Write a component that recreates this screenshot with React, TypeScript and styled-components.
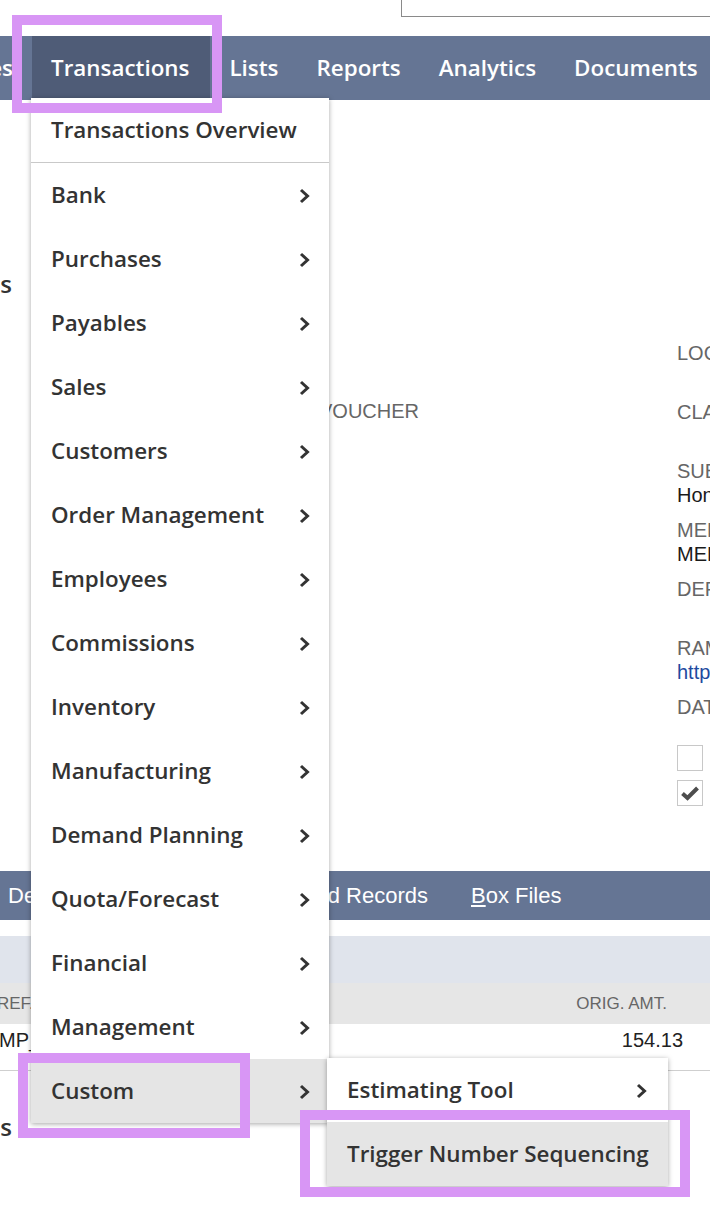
import React from "react";
import styled, { createGlobalStyle } from "styled-components";

const Global = createGlobalStyle`
  html, body { margin: 0; padding: 0; background: #fff; overflow: hidden; }
  * { box-sizing: border-box; }
`;

const Page = styled.div`
  position: relative;
  width: 710px;
  height: 1212px;
  overflow: hidden;
  background: #fff;
  font-family: "Liberation Sans", Arial, sans-serif;
`;

const TopStrip = styled.div`
  height: 36px;
  display: flex;
  padding-left: 401px;
`;

const SearchBox = styled.div`
  width: 400px;
  height: 17px;
  border: 1px solid #8a8a8a;
  border-top: none;
  flex-shrink: 0;
`;

const NavBar = styled.nav`
  height: 64px;
  background: #657594;
  display: flex;
  overflow: hidden;
`;

const NavTab = styled.div<{ $active?: boolean }>`
  display: flex;
  align-items: center;
  height: 100%;
  padding: 0 19px;
  flex-shrink: 0;
  white-space: nowrap;
  background: ${(p) => (p.$active ? "#4f5c77" : "transparent")};
  color: #fff;
  font: 600 22.4px/1 "Open Sans", sans-serif;
`;

const ActiveTab = styled(NavTab)`
  padding: 0 21px 0 19px;
`;

const NavLead = styled(NavTab)`
  width: 32px;
  padding: 0 19px 0 0;
  justify-content: flex-end;
  overflow: hidden;
`;

const Main = styled.div`
  height: 771px;
  display: flex;
  white-space: nowrap;
`;

const LeftCol = styled.div`
  width: 315px;
  flex-shrink: 0;
  padding-top: 169px;
`;

const Clipped = styled.div<{ $w: number }>`
  width: ${(p) => p.$w}px;
  display: flex;
  justify-content: flex-end;
  overflow: hidden;
  white-space: nowrap;
`;

const SectionTitle = styled.span`
  font: 600 24px/30px "Open Sans", sans-serif;
  color: #333;
`;

const MidCol = styled.div`
  width: 362px;
  flex-shrink: 0;
  padding: 299px 0 0 4px;
`;

const RightCol = styled.div`
  flex: 1;
  padding-top: 241px;
  display: flex;
  flex-direction: column;
  gap: 10px;
`;

const Field = styled.div`
  display: flex;
  flex-direction: column;
`;

const Label = styled.div`
  font-size: 20px;
  line-height: 24px;
  color: #666;
  text-transform: uppercase;
`;

const Value = styled.div<{ $link?: boolean }>`
  font-size: 20px;
  line-height: 25px;
  height: 25px;
  color: ${(p) => (p.$link ? "#1f4aa0" : "#1a1a1a")};
`;

const Checks = styled.div`
  display: flex;
  flex-direction: column;
  gap: 9px;
  margin-top: -9px;
`;

const CheckBox = styled.div`
  width: 26px;
  height: 26px;
  border: 1px solid #c8c8c8;
  background: #fff;
  display: flex;
  align-items: center;
  justify-content: center;
`;

const SubTabBar = styled.div`
  height: 49px;
  background: #657594;
  display: grid;
  grid-template-columns: 92px 336px 1fr;
  align-items: center;
  color: #fff;
  font-size: 22px;
  white-space: nowrap;
`;

const SubTab = styled.div<{ $end?: boolean }>`
  display: flex;
  justify-content: ${(p) => (p.$end ? "flex-end" : "flex-start")};
  overflow: hidden;
`;

const FirstSubTab = styled(SubTab)`
  padding-left: 8px;
`;

const LastSubTab = styled(SubTab)`
  padding-left: 43px;
`;

const Band = styled.div`
  margin-top: 16px;
  height: 47px;
  background: #e0e4ec;
`;

const TableHead = styled.div`
  height: 41px;
  background: #e6e6e6;
  display: flex;
  align-items: center;
  justify-content: space-between;
  padding-right: 43px;
  font-size: 17px;
  color: #666;
`;

const TableRow = styled.div`
  height: 47px;
  border-bottom: 1px solid #cfcfcf;
  display: flex;
  align-items: flex-start;
  justify-content: space-between;
  padding: 4px 27px 0 0;
  font-size: 20px;
  line-height: 24px;
  color: #222;
`;

const Cut = styled.span<{ $shift: number }>`
  margin-left: ${(p) => p.$shift}px;
  white-space: nowrap;
`;

const FooterTitle = styled.div`
  margin-top: 41px;
`;

const Menu = styled.div<{ $left: number; $top: number; $width: number }>`
  position: absolute;
  left: ${(p) => p.$left}px;
  top: ${(p) => p.$top}px;
  width: ${(p) => p.$width}px;
  background: #fff;
  box-shadow: 0 1px 5px rgba(0, 0, 0, 0.35);
`;

const MenuItem = styled.div<{ $active?: boolean; $divider?: boolean; $padR?: number }>`
  height: ${(p) => (p.$divider ? 65 : 64)}px;
  display: flex;
  align-items: center;
  justify-content: space-between;
  padding: 1px ${(p) => p.$padR ?? 19}px 0 20px;
  background: ${(p) => (p.$active ? "#e5e5e5" : "#fff")};
  border-bottom: ${(p) => (p.$divider ? "1px solid #c9c9c9" : "none")};
  color: #333;
  font: 600 22.4px/1 "Open Sans", sans-serif;
  white-space: nowrap;
`;

const Annotation = styled.div<{ $x: number; $y: number; $w: number; $h: number }>`
  position: absolute;
  left: ${(p) => p.$x}px;
  top: ${(p) => p.$y}px;
  width: ${(p) => p.$w}px;
  height: ${(p) => p.$h}px;
  border: 10px solid #d896f5;
  pointer-events: none;
`;

const Chevron = () => (
  <svg width="11" height="16" viewBox="0 0 11 16" aria-hidden>
    <polyline points="2,2 8.5,8 2,14" fill="none" stroke="#333" strokeWidth="3" strokeLinejoin="miter" />
  </svg>
);

const Tick = () => (
  <svg width="20" height="16" viewBox="0 0 20 16" aria-hidden>
    <polyline points="2.5,8.5 7.5,13 17.5,3" fill="none" stroke="#4d4d4d" strokeWidth="4" />
  </svg>
);

const menuItems = [
  "Bank",
  "Purchases",
  "Payables",
  "Sales",
  "Customers",
  "Order Management",
  "Employees",
  "Commissions",
  "Inventory",
  "Manufacturing",
  "Demand Planning",
  "Quota/Forecast",
  "Financial",
  "Management",
];

const fields: { label: string; value?: string; link?: boolean }[] = [
  { label: "Location" },
  { label: "Class" },
  { label: "Subsidiary", value: "Honeycomb Mfg." },
  { label: "Memo", value: "MEMO" },
  { label: "Department" },
  { label: "Ramp Link", value: "https://app.ramp.com", link: true },
  { label: "Date Created" },
];

export default function App() {
  return (
    <Page>
      <Global />
      <TopStrip>
        <SearchBox />
      </TopStrip>
      <NavBar>
        <NavLead>Activities</NavLead>
        <ActiveTab $active>Transactions</ActiveTab>
        <NavTab>Lists</NavTab>
        <NavTab>Reports</NavTab>
        <NavTab>Analytics</NavTab>
        <NavTab>Documents</NavTab>
        <NavTab>Setup</NavTab>
      </NavBar>
      <Main>
        <LeftCol>
          <Clipped $w={12}>
            <SectionTitle>Items</SectionTitle>
          </Clipped>
        </LeftCol>
        <MidCol>
          <Label>Voucher</Label>
        </MidCol>
        <RightCol>
          {fields.map((f) => (
            <Field key={f.label}>
              <Label>{f.label}</Label>
              <Value $link={f.link}>{f.value ?? ""}</Value>
            </Field>
          ))}
          <Checks>
            <CheckBox />
            <CheckBox>
              <Tick />
            </CheckBox>
          </Checks>
        </RightCol>
      </Main>
      <SubTabBar>
        <FirstSubTab>Details</FirstSubTab>
        <SubTab $end>Related Records</SubTab>
        <LastSubTab>
          <span>
            <u>B</u>ox Files
          </span>
        </LastSubTab>
      </SubTabBar>
      <Band />
      <TableHead>
        <Cut $shift={-3}>REF. NO.</Cut>
        <span>ORIG. AMT.</span>
      </TableHead>
      <TableRow>
        <Cut $shift={-1}>MP_1024</Cut>
        <span>154.13</span>
      </TableRow>
      <FooterTitle>
        <Clipped $w={12}>
          <SectionTitle>Items</SectionTitle>
        </Clipped>
      </FooterTitle>

      <Menu $left={31} $top={98} $width={298}>
        <MenuItem $divider>Transactions Overview</MenuItem>
        {menuItems.map((m) => (
          <MenuItem key={m}>
            {m}
            <Chevron />
          </MenuItem>
        ))}
        <MenuItem $active>
          Custom
          <Chevron />
        </MenuItem>
      </Menu>

      <Menu $left={327} $top={1058} $width={341}>
        <MenuItem $padR={21}>
          Estimating Tool
          <Chevron />
        </MenuItem>
        <MenuItem $active $padR={21}>
          Trigger Number Sequencing
        </MenuItem>
      </Menu>

      <Annotation $x={12} $y={15} $w={210} $h={98} />
      <Annotation $x={18} $y={1053} $w={232} $h={85} />
      <Annotation $x={300} $y={1110} $w={390} $h={87} />
    </Page>
  );
}
